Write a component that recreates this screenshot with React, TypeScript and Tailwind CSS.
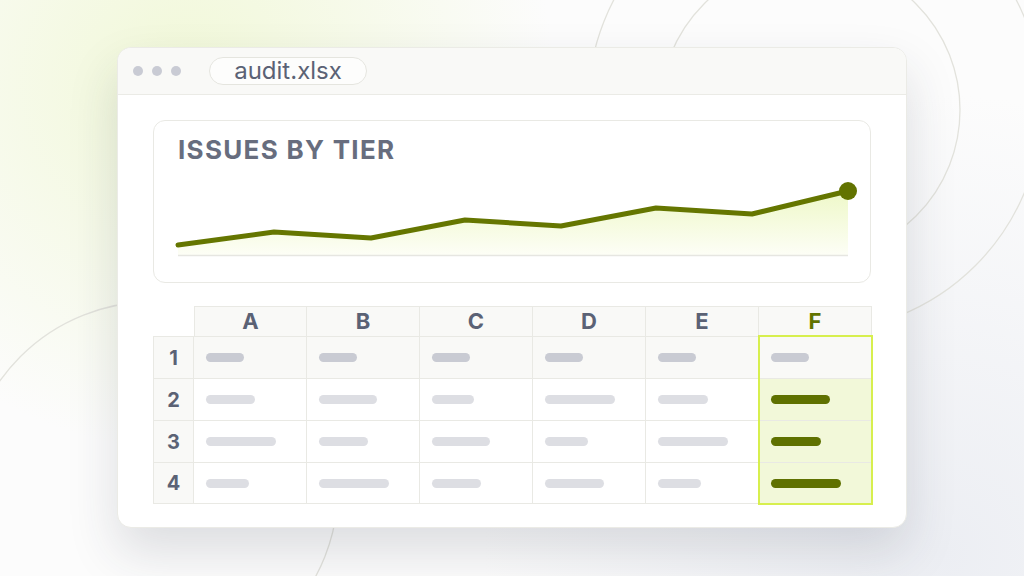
import React from 'react';

const cols = ['A', 'B', 'C', 'D', 'E', 'F'];

// bar widths per row, columns A..F
const rows = [
  [38, 38, 38, 38, 38, 38],
  [49, 58, 42, 70, 50, 59],
  [70, 49, 58, 43, 70, 50],
  [43, 70, 49, 59, 43, 70],
];

const pts: [number, number][] = [
  [0, 75], [96, 62], [193, 68], [287, 50], [383, 56], [478, 38], [574, 44], [670, 21],
];

function Chart() {
  const line = pts.map((p) => p.join(',')).join(' ');
  const area = `0,85 ${line} 670,85`;
  return (
    <svg width="670" height="90" viewBox="0 0 670 90" className="block overflow-visible">
      <defs>
        <linearGradient id="fillg" x1="0" y1="0" x2="0" y2="1">
          <stop offset="0%" stopColor="#eef8c8" />
          <stop offset="100%" stopColor="#fdfef6" />
        </linearGradient>
      </defs>
      <polygon points={area} fill="url(#fillg)" />
      <line x1="0" y1="85.5" x2="670" y2="85.5" stroke="#e6e6e1" strokeWidth="1.5" />
      <polyline points={line} fill="none" stroke="#657600" strokeWidth="5" strokeLinejoin="round" strokeLinecap="round" />
      <circle cx="670" cy="21" r="9" fill="#627300" />
    </svg>
  );
}

function Backdrop() {
  return (
    <svg className="absolute inset-0 pointer-events-none" width="1024" height="576" viewBox="0 0 1024 576">
      <g fill="none" stroke="#e2e2dc" strokeWidth="1.3">
        <circle cx="815" cy="105" r="227" />
        <circle cx="810" cy="110" r="150" />
        <circle cx="152" cy="488" r="186" />
      </g>
    </svg>
  );
}

export default function App() {
  return (
    <div
      className="relative w-[1024px] h-[576px] overflow-hidden bg-[#fcfcfc] bg-[radial-gradient(circle_at_18%_14%,#f1f8d8_0%,rgba(252,252,252,0)_38%),radial-gradient(circle_at_92%_96%,#eceef3_0%,rgba(252,252,252,0)_42%)]"
      style={{ fontFamily: 'Inter, "Noto Sans", sans-serif' }}
    >
      <Backdrop />
      <div className="relative pt-[47px] pl-[117px]">
        <div className="w-[790px] h-[481px] rounded-[14px] border border-[#ebebe6] bg-white overflow-hidden shadow-[0_24px_50px_rgba(40,45,70,0.15)]">
          {/* title bar */}
          <div className="h-[47px] bg-[#f9f9f7] border-b border-[#ebebe6] flex items-center pl-[15px]">
            <div className="flex gap-[9px]">
              <span className="w-[10px] h-[10px] rounded-full bg-[#c9cbd4]" />
              <span className="w-[10px] h-[10px] rounded-full bg-[#c9cbd4]" />
              <span className="w-[10px] h-[10px] rounded-full bg-[#c9cbd4]" />
            </div>
            <div className="ml-[28px] w-[158px] h-[28px] rounded-full border border-[#e5e5df] bg-[#fdfdfc] flex items-center justify-center text-[24px] leading-none text-[#5b6275]">
              audit.xlsx
            </div>
          </div>

          {/* body */}
          <div className="flex flex-col gap-[23px] px-[35px] pt-[25px]">
            <div className="h-[163px] rounded-[12px] border border-[#e9e9e4] bg-white px-[24px] pt-[16px]">
              <div className="text-[26px] leading-[26px] font-bold tracking-[0.05em] text-[#676d7e]">ISSUES BY TIER</div>
              <div className="mt-[7px]">
                <Chart />
              </div>
            </div>

            <div className="relative grid grid-cols-[41px_repeat(6,113px)] grid-rows-[30px_repeat(4,42px)]">
              <div />
              {cols.map((c, i) => (
                <div
                  key={c}
                  className={`flex items-center justify-center bg-[#f9f9f7] border-t border-r border-[#e9e9e4] text-[22px] font-bold ${i === 0 ? 'border-l' : ''} ${c === 'F' ? 'text-[#627300]' : 'text-[#5b6275]'}`}
                >
                  {c}
                </div>
              ))}
              {rows.map((r, ri) => (
                <React.Fragment key={ri}>
                  <div
                    className={`flex items-center justify-center bg-[#f9f9f7] border-l border-t border-r border-[#e9e9e4] text-[20px] font-bold text-[#5b6275] ${ri === 3 ? 'border-b' : ''}`}
                  >
                    {ri + 1}
                  </div>
                  {r.map((w, ci) => {
                    const isF = ci === 5;
                    const bg = ri === 0 ? 'bg-[#f9f9f7]' : isF ? 'bg-[#f2f8d9]' : 'bg-white';
                    const bar = ri === 0 ? 'bg-[#c9cbd3]' : isF ? 'bg-[#5f7100]' : 'bg-[#dddee3]';
                    return (
                      <div
                        key={ci}
                        className={`flex items-center pl-[12px] border-t border-r border-[#e9e9e4] ${ri === 3 ? 'border-b' : ''} ${bg}`}
                      >
                        <span className={`block h-[9px] rounded-full ${bar}`} style={{ width: w }} />
                      </div>
                    );
                  })}
                </React.Fragment>
              ))}
              <div className="absolute left-[605px] top-[29px] w-[115px] h-[170px] border-2 border-[#d7ef4e] pointer-events-none" />
            </div>
          </div>
        </div>
      </div>
    </div>
  );
}
